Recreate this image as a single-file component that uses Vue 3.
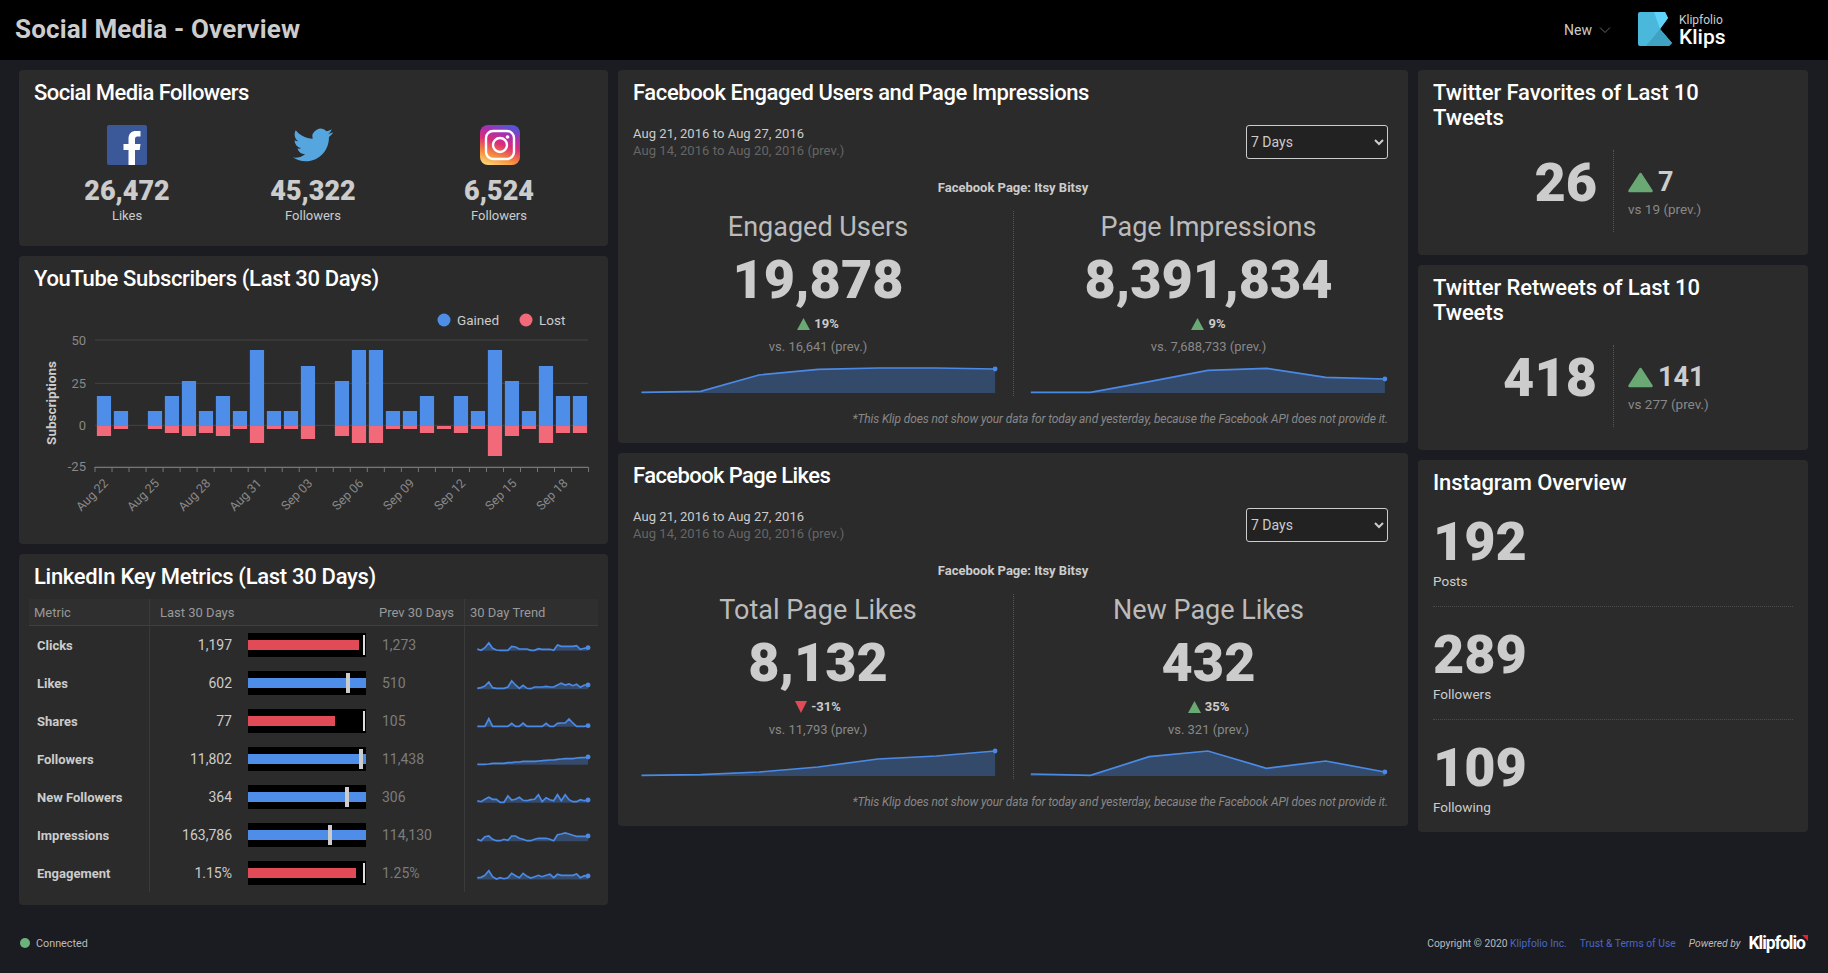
<script setup>
const gained = [441,486,null,486,441,396,486,441,486,303,486,486,351,null,396,303,303,486,486,441,null,441,486,303,396,486,351,441,441]
const lost = [561,540,null,540,552,561,552,561,540,582,540,540,570,null,561,582,582,540,540,552,540,552,540,621,561,540,582,552,552]
const CH = 302
const zy = z => 250 + z / 3 - CH
const zero = zy(531)
const bars = gained.map((g, i) => {
  const x = 245 / 2.529 - 19 + i * 17
  return {
    x,
    gy: g === null ? zero : zy(g),
    gh: g === null ? 0 : zero - zy(g),
    ly: zero,
    lh: lost[i] === null ? 0 : zy(lost[i]) - zero
  }
})
const grid = [{ l: '50', y: zy(273) }, { l: '25', y: zy(403) }, { l: '0', y: zy(529) }, { l: '-25', y: zy(652) }]
const ticks = Array.from({ length: 30 }, (_, i) => 76 + i * 17.02)
const dates = ['Aug 22', 'Aug 25', 'Aug 28', 'Aug 31', 'Sep 03', 'Sep 06', 'Sep 09', 'Sep 12', 'Sep 15', 'Sep 18']

function sparkPath(vals, origin, rowTop) {
  const pts = vals.map((v, i) => [12.3 + 3.82 * i, origin + v / 3 - rowTop])
  const base = Math.max(...pts.map(p => p[1])) + 0.5
  const line = pts.map(p => p[0].toFixed(1) + ',' + p[1].toFixed(1)).join(' ')
  const last = pts[pts.length - 1]
  const area = `M${pts[0][0]},${base} L${line} L${last[0]},${base} Z`
  return { line, area, cx: last[0], cy: last[1] }
}
const raw = [
  { name: 'Clicks', v: '1,197', p: '1,273', w: 94, t: 98.6, thin: true, red: true, o: 625,
    s: [72,76,68,54,70,75,76,76,76,64,66,72,72,72,76,76,71,73,73,73,76,60,64,64,64,64,62,73,70,68] },
  { name: 'Likes', v: '602', p: '510', w: 100, t: 84.6, o: 625,
    s: [190,188,183,171,188,190,190,190,186,168,180,190,181,190,191,186,186,186,184,186,186,180,175,180,177,182,178,187,180,180] },
  { name: 'Shares', v: '77', p: '105', w: 73.6, t: 98.6, thin: true, red: true, o: 625,
    s: [304,304,304,281,304,304,304,304,304,295,304,304,294,304,304,304,304,304,295,304,304,295,294,294,282,294,304,304,304,302] },
  { name: 'Followers', v: '11,802', p: '11,438', w: 100, t: 96, o: 550,
    s: [643,643,643,642,640,640,640,640,638,638,636,636,634,634,634,634,633,632,631,630,630,628,627,626,626,626,624,623,623,621] },
  { name: 'New Followers', v: '364', p: '306', w: 100, t: 84, o: 760,
    s: [122,125,118,112,118,118,127,127,108,120,118,112,121,122,119,118,104,125,113,119,122,104,122,104,119,125,125,119,122,120] },
  { name: 'Impressions', v: '163,786', p: '114,130', w: 100, t: 69.6, o: 760,
    s: [238,242,230,228,238,242,242,238,241,228,228,235,238,242,242,238,235,235,235,238,242,224,222,219,222,226,229,229,229,228] },
  { name: 'Engagement', v: '1.15%', p: '1.25%', w: 91.3, t: 98.6, thin: true, red: true, o: 760,
    s: [353,352,346,332,350,357,353,356,353,340,347,353,340,349,354,350,346,350,346,343,353,343,346,346,346,346,342,353,347,348] }
]
const rows = raw.map((r, i) => ({ ...r, spark: sparkPath(r.s, r.o, 626 + 38 * i) }))

function miniSpark(zx, zs, originY, top, colLeft) {
  const pts = zx.map((x, i) => [615 + x / 1.96 - colLeft, originY + zs[i] / 3 - top])
  const base = Math.max(...pts.map(p => p[1])) + 0.6
  const line = pts.map(p => p[0].toFixed(1) + ',' + p[1].toFixed(1)).join(' ')
  const last = pts[pts.length - 1]
  return { line, area: `M${pts[0][0]},${base} L${line} L${last[0]},${base} Z`, cx: last[0], cy: last[1] }
}
const zl = [52,168,282,398,515,630,745]
const zr = [815,932,1047,1162,1277,1393,1509]
const fbCards = [
  {
    title: 'Facebook Engaged Users and Page Impressions',
    kind: 'fb-a',
    metrics: [
      { label: 'Engaged Users', num: '19,878', delta: '19%', up: true, vs: 'vs. 16,641 (prev.)', sp: miniSpark(zl, [997,994,945,928,924,924,927], 60, 360, 623) },
      { label: 'Page Impressions', num: '8,391,834', delta: '9%', up: true, vs: 'vs. 7,688,733 (prev.)', sp: miniSpark(zr, [997,997,965,931,925,952,957], 60, 360, 1013) }
    ]
  },
  {
    title: 'Facebook Page Likes',
    kind: 'fb-b',
    metrics: [
      { label: 'Total Page Likes', num: '8,132', delta: '-31%', up: false, vs: 'vs. 11,793 (prev.)', sp: miniSpark(zl, [976,974,966,951,927,918,903], 450, 743, 623) },
      { label: 'New Page Likes', num: '432', delta: '35%', up: true, vs: 'vs. 321 (prev.)', sp: miniSpark(zr, [972,976,920,903,955,933,966], 450, 743, 1013) }
    ]
  }
]
const tw = [
  { title: 'Twitter Favorites of Last 10 Tweets', num: '26', d: '7', vs: 'vs 19 (prev.)' },
  { title: 'Twitter Retweets of Last 10 Tweets', num: '418', d: '141', vs: 'vs 277 (prev.)' }
]
const ig = [{ n: '192', l: 'Posts' }, { n: '289', l: 'Followers' }, { n: '109', l: 'Following' }]
</script>

<template>
  <div class="app">
    <header class="top">
      <h1 class="page-title">Social Media - Overview</h1>
      <div class="top-right">
        <span class="new">New</span>
        <svg class="chev" width="12" height="8" viewBox="0 0 12 8"><path d="M1 1.5 6 6.5 11 1.5" fill="none" stroke="#666" stroke-width="1"/></svg>
        <svg class="klogo" width="34" height="34" viewBox="0 0 34 34">
          <path d="M2 0H27L30 6 22 17 34 31 31 34H2Q0 34 0 32V2Q0 0 2 0Z" fill="#4ab8da"/>
          <path d="M16 0H27L30 6 22 17Z" fill="#60d3fb"/>
          <path d="M8 34 22 17 34 31 31 34Z" fill="#3fa2c3"/>
        </svg>
        <div class="kname"><div class="k1">Klipfolio</div><div class="k2">Klips</div></div>
      </div>
    </header>

    <main class="board">
      <section class="col col1">
        <article class="card followers">
          <h2 class="ct">Social Media Followers</h2>
          <div class="soc">
            <div class="soc-item">
              <svg class="soc-ic" width="40" height="40" viewBox="0 0 40 40">
                <rect width="40" height="40" rx="2" fill="#3b5998"/>
                <path d="M21.5 40V25H16.5V19H21.5V14C21.5 8.5 24.5 6 29 6H33.5V11.5H30.5C28.5 11.5 28 12.5 28 14.5V19H33.5L32.7 25H28V40Z" fill="#fff"/>
              </svg>
              <div class="soc-n">26,472</div><div class="soc-l">Likes</div>
            </div>
            <div class="soc-item">
              <svg class="soc-ic" width="40" height="40" viewBox="0 0 24 24">
                <path fill="#55a6de" d="M23.953 4.57a10 10 0 01-2.825.775 4.958 4.958 0 002.163-2.723c-.951.555-2.005.959-3.127 1.184a4.92 4.92 0 00-8.384 4.482C7.69 8.095 4.067 6.13 1.64 3.162a4.822 4.822 0 00-.666 2.475c0 1.71.87 3.213 2.188 4.096a4.904 4.904 0 01-2.228-.616v.06a4.923 4.923 0 003.946 4.827 4.996 4.996 0 01-2.212.085 4.936 4.936 0 004.604 3.417 9.867 9.867 0 01-6.102 2.105c-.39 0-.779-.023-1.17-.067a13.995 13.995 0 007.557 2.209c9.053 0 13.998-7.496 13.998-13.985 0-.21 0-.42-.015-.63A9.935 9.935 0 0024 4.59z"/>
              </svg>
              <div class="soc-n">45,322</div><div class="soc-l">Followers</div>
            </div>
            <div class="soc-item">
              <svg class="soc-ic ig-ic" width="40" height="40" viewBox="0 0 40 40">
                <defs>
                  <linearGradient id="ig" x1="0.25" y1="1" x2="0.6" y2="0">
                    <stop offset="0" stop-color="#fcd26e"/>
                    <stop offset="0.25" stop-color="#f58a3c"/>
                    <stop offset="0.55" stop-color="#dc2d78"/>
                    <stop offset="0.8" stop-color="#a92fb0"/>
                    <stop offset="1" stop-color="#5a52d6"/>
                  </linearGradient>
                </defs>
                <rect width="40" height="40" rx="8" fill="url(#ig)"/>
                <rect x="6" y="6" width="28" height="28" rx="7" fill="none" stroke="#fff" stroke-width="2.4"/>
                <circle cx="20" cy="20" r="7" fill="none" stroke="#fff" stroke-width="2.4"/>
                <circle cx="27.5" cy="12" r="1.8" fill="#fff"/>
              </svg>
              <div class="soc-n">6,524</div><div class="soc-l">Followers</div>
            </div>
          </div>
        </article>

        <article class="card youtube">
          <h2 class="ct">YouTube Subscribers (Last 30 Days)</h2>
          <svg class="yt" width="589" height="226" viewBox="0 0 589 226">
            <g>
              <circle cx="425" cy="19" r="6.5" fill="#4f8ee8"/>
              <text x="438" y="24" class="lg">Gained</text>
              <circle cx="507" cy="19" r="6.5" fill="#f26a7a"/>
              <text x="520" y="24" class="lg">Lost</text>
            </g>
            <g v-for="g in grid" :key="g.l">
              <line x1="76" x2="569" :y1="g.y" :y2="g.y" stroke="#444" stroke-width="1"/>
              <text x="67" :y="g.y + 5" text-anchor="end" class="ax">{{ g.l }}</text>
            </g>
            <text class="yt-title" text-anchor="middle" transform="translate(37 102) rotate(-90)">Subscriptions</text>
            <g v-for="(b, i) in bars" :key="i">
              <rect :x="b.x" :y="b.gy" width="14.2" :height="b.gh" fill="#4f8ee8"/>
              <rect :x="b.x" :y="b.ly" width="14.2" :height="b.lh" fill="#f26a7a"/>
            </g>
            <line x1="75.5" x2="570" y1="166.5" y2="166.5" stroke="#777"/>
            <line v-for="(t, i) in ticks" :key="'t' + i" :x1="t" :x2="t" y1="166" y2="171" stroke="#777"/>
            <text v-for="(d, i) in dates" :key="d" class="ax xl" text-anchor="end"
              :transform="`translate(${90 + i * 51.05} 183) rotate(-45)`">{{ d }}</text>
          </svg>
        </article>

        <article class="card linkedin">
          <h2 class="ct">LinkedIn Key Metrics (Last 30 Days)</h2>
          <div class="tbl">
            <div class="thead">
              <div class="th m">Metric</div>
              <div class="th l">Last 30 Days</div>
              <div class="th p">Prev 30 Days</div>
              <div class="th t">30 Day Trend</div>
            </div>
            <div v-for="r in rows" :key="r.name" class="tr">
              <div class="td-m">{{ r.name }}</div>
              <div class="td-v">{{ r.v }}</div>
              <div class="td-b">
                <div class="bullet">
                  <div class="fill" :class="{ red: r.red }" :style="{ width: r.w + '%' }"></div>
                  <div class="target" :class="{ thin: r.thin }" :style="{ left: r.t + '%' }"></div>
                </div>
              </div>
              <div class="td-p">{{ r.p }}</div>
              <div class="td-t">
                <svg width="134" height="38" viewBox="0 0 134 38">
                  <path :d="r.spark.area" fill="#364a69"/>
                  <polyline :points="r.spark.line" fill="none" stroke="#4a8ae6" stroke-width="1.7"/>
                  <circle :cx="r.spark.cx" :cy="r.spark.cy" r="2.4" fill="#4a8ae6"/>
                </svg>
              </div>
            </div>
          </div>
        </article>
      </section>

      <section class="col col2">
        <article v-for="c in fbCards" :key="c.title" class="card fb" :class="c.kind">
          <h2 class="ct">{{ c.title }}</h2>
          <div class="fb-top">
            <div class="dates">
              <div class="d1">Aug 21, 2016 to Aug 27, 2016</div>
              <div class="d2">Aug 14, 2016 to Aug 20, 2016 (prev.)</div>
            </div>
            <select class="sel"><option>7 Days</option><option>30 Days</option></select>
          </div>
          <div class="page-name">Facebook Page: Itsy Bitsy</div>
          <div class="metrics">
            <div v-for="m in c.metrics" :key="m.label" class="metric">
              <div class="m-label">{{ m.label }}</div>
              <div class="m-num">{{ m.num }}</div>
              <div class="m-delta">
                <svg v-if="m.up" width="13" height="12" viewBox="0 0 13 12"><path d="M6.5 0 13 12H0Z" fill="#6aa874"/></svg>
                <svg v-else width="12" height="12" viewBox="0 0 12 12"><path d="M0 0H12L6 12Z" fill="#e14b57"/></svg>
                <span>{{ m.delta }}</span>
              </div>
              <div class="m-vs">{{ m.vs }}</div>
              <svg class="m-spark" width="390" height="36" viewBox="0 0 390 36">
                <path :d="m.sp.area" fill="#344a6b"/>
                <polyline :points="m.sp.line" fill="none" stroke="#4a8ae6" stroke-width="1.7"/>
                <circle :cx="m.sp.cx" :cy="m.sp.cy" r="2.4" fill="#4a8ae6"/>
              </svg>
            </div>
          </div>
          <div class="note">*This Klip does not show your data for today and yesterday, because the Facebook API does not provide it.</div>
        </article>
      </section>

      <section class="col col3">
        <article v-for="t in tw" :key="t.title" class="card tw">
          <h2 class="ct narrow">{{ t.title }}</h2>
          <div class="tw-body">
            <div class="tw-num">{{ t.num }}</div>
            <div class="tw-right">
              <div class="tw-delta">
                <svg width="25" height="21" viewBox="0 0 25 21"><path d="M12.5 2 23.5 19H1.5Z" fill="#6aa874" stroke="#6aa874" stroke-width="2.5" stroke-linejoin="round"/></svg>
                <span>{{ t.d }}</span>
              </div>
              <div class="tw-vs">{{ t.vs }}</div>
            </div>
          </div>
        </article>
        <article class="card insta">
          <h2 class="ct">Instagram Overview</h2>
          <div class="ig-list">
            <div v-for="(s, i) in ig" :key="s.l" class="ig-row" :class="{ last: i === 2 }">
              <div class="ig-n">{{ s.n }}</div>
              <div class="ig-l">{{ s.l }}</div>
            </div>
          </div>
        </article>
      </section>
    </main>

    <footer class="foot">
      <div class="conn"><span class="dot"></span>Connected</div>
      <div class="foot-r">
        <span>Copyright © 2020 <a class="lnk">Klipfolio Inc.</a></span>
        <a class="lnk">Trust &amp; Terms of Use</a>
        <em>Powered by</em>
        <span class="brand">Klipfolio<svg class="brand-mark" width="6" height="6" viewBox="0 0 6 6"><path d="M0 0H6V6Z" fill="#e8202e"/></svg></span>
      </div>
    </footer>
  </div>
</template>

<style scoped>
.app {
  width: 1828px;
  height: 973px;
  background: #1b1c21;
  display: flex;
  flex-direction: column;
  font-family: Roboto, "Liberation Sans", sans-serif;
  color: #ccc;
  overflow: hidden;
}
.top {
  height: 60px;
  flex: none;
  background: #000;
  display: flex;
  align-items: center;
  justify-content: space-between;
  padding-left: 15px;
}
.page-title {
  margin: -2px 0 0;
  font-size: 26px;
  font-weight: 700;
  color: #ccc;
  letter-spacing: 0.15px;
}
.top-right { display: flex; align-items: center; width: 264px; }
.new { font-size: 14px; color: #ccc; margin-right: 7px; }
.chev { margin-right: 27px; }
.klogo { margin-right: 7px; margin-top: -2px; }
.k1 { font-size: 12px; line-height: 14px; color: #ccc; }
.k2 { font-size: 21px; line-height: 20px; font-weight: 500; color: #fff; }

.board {
  flex: 1;
  display: grid;
  grid-template-columns: 589px 790px 390px;
  column-gap: 10px;
  padding: 10px 20px 0 19px;
  align-items: start;
}
.col { display: flex; flex-direction: column; gap: 10px; }
.card { background: #2b2b2b; border-radius: 4px; padding: 10px 15px 0; box-sizing: border-box; }
.ct { margin: 0; font-size: 22px; line-height: 25px; font-weight: 500; color: #fff; letter-spacing: -0.12px; }
.ct.narrow { max-width: 300px; }
.followers .ct { letter-spacing: -0.58px; }
.youtube .ct { letter-spacing: -0.34px; }
.linkedin .ct { letter-spacing: -0.3px; }
.fb-a .ct { letter-spacing: -0.4px; }
.fb-b .ct { letter-spacing: -0.6px; }

.followers { height: 176px; }
.soc { display: grid; grid-template-columns: repeat(3, 186px); margin-top: 20px; }
.soc-item { display: flex; flex-direction: column; align-items: center; }
.soc-ic { display: block; }
.ig-ic { margin-left: 2px; }
.soc-n { font-size: 27px; line-height: 30px; font-weight: 900; color: #ccc; margin-top: 11px; }
.soc-l { font-size: 13px; line-height: 16px; color: #ccc; margin-top: 2px; }

.youtube { height: 288px; padding-left: 15px; }
.yt { display: block; margin: 10px 0 0 -15px; }
.lg { font-family: Roboto, sans-serif; font-size: 13.5px; fill: #ccc; }
.ax { font-family: Roboto, sans-serif; font-size: 13px; fill: #888; }
.xl { font-size: 12.5px; }
.yt-title { font-family: Roboto, sans-serif; font-size: 13.5px; font-weight: 700; fill: #ccc; }

.linkedin { height: 351px; padding: 10px 10px 0; }
.linkedin .ct { padding-left: 5px; }
.tbl { margin-top: 10px; }
.thead {
  display: grid;
  grid-template-columns: 120px 226px 89px 134px;
  height: 27px;
  background: #2f2f2f;
  border-bottom: 1px solid #3f3f3f;
  box-sizing: border-box;
  font-size: 13px;
  color: #999;
}
.th { line-height: 27px; white-space: nowrap; }
.th.m { padding-left: 5px; }
.th.l { border-left: 1px solid #3a3a3a; padding-left: 10px; }
.th.p { padding-left: 4px; }
.th.t { border-left: 1px solid #3a3a3a; padding-left: 5px; }
.tr {
  display: grid;
  grid-template-columns: 120px 83px 150px 82px 134px;
  height: 38px;
  align-items: center;
  font-size: 14px;
}
.td-m { padding-left: 8px; font-size: 13px; font-weight: 700; color: #ccc; white-space: nowrap; }
.td-v { text-align: right; color: #ccc; border-left: 1px solid #3a3a3a; line-height: 38px; }
.td-b { padding-left: 16px; }
.td-p { color: #7c7c7c; }
.td-t { border-left: 1px solid #3a3a3a; height: 38px; }
.td-t svg { display: block; }
.bullet { position: relative; width: 118px; height: 24px; background: #000; }
.fill { position: absolute; left: 0; top: 7px; height: 10px; background: #4f8ee8; }
.fill.red { background: #e14b57; }
.target { position: absolute; top: 2px; height: 20px; width: 4px; margin-left: -2px; background: #ccc; }
.target.thin { width: 2px; margin-left: -1px; background: #ddd; }

.fb { height: 373px; padding: 10px 20px 0 15px; }
.fb-top { display: flex; justify-content: space-between; margin-top: 20px; height: 34px; }
.dates { font-size: 13px; line-height: 17px; letter-spacing: 0.06px; }
.d1 { color: #ccc; }
.d2 { color: #666; }
.sel {
  width: 142px;
  height: 34px;
  background: #222;
  color: #ccc;
  color-scheme: dark;
  border: 1px solid #ccc;
  border-radius: 3px;
  font-family: Roboto, sans-serif;
  font-size: 14px;
  padding: 0;
}
.page-name { text-align: center; font-size: 13px; line-height: 17px; font-weight: 700; color: #ccc; margin: 20px 0 0 5px; }
.metrics { display: grid; grid-template-columns: 390px 390px; margin: 15px 0 0 -10px; height: 185px; }
.metric { text-align: center; }
.metric + .metric { border-left: 1px dotted #555; }
.m-label { font-size: 27px; line-height: 32px; color: #bbb; }
.m-num { font-size: 54px; line-height: 60px; font-weight: 900; color: #ccc; margin-top: 7px; }
.m-delta { display: flex; justify-content: center; align-items: center; gap: 4px; font-size: 13px; line-height: 16px; font-weight: 700; color: #ccc; margin-top: 6px; height: 16px; }
.m-vs { font-size: 13px; line-height: 16px; color: #888; margin-top: 7px; }
.m-spark { display: block; margin-top: 5px; }
.metric + .metric .m-spark { margin-left: -1px; }
.note { text-align: right; font-size: 12px; line-height: 16px; font-style: italic; color: #888; margin-top: 15px; white-space: nowrap; letter-spacing: -0.12px; }

.tw { height: 185px; }
.tw-body { display: flex; margin-top: 20px; height: 82px; }
.tw-num { width: 164px; text-align: right; font-size: 54px; line-height: 62px; font-weight: 900; color: #ccc; padding-top: 2px; }
.tw-right { margin-left: 16px; border-left: 1px dotted #555; padding-left: 14px; }
.tw-delta { display: flex; align-items: center; gap: 5px; font-size: 27px; line-height: 30px; font-weight: 700; color: #ccc; margin-top: 17px; }
.tw-vs { font-size: 13.5px; line-height: 16px; color: #888; margin-top: 4px; }

.insta { height: 372px; }
.ig-list { margin-top: -1px; }
.ig-row { height: 113px; box-sizing: border-box; border-bottom: 1px dotted #4c4c4c; padding-top: 17px; }
.ig-row.last { border-bottom: 0; }
.ig-n { font-size: 54px; line-height: 62px; font-weight: 900; color: #ccc; }
.ig-l { font-size: 13.5px; line-height: 18px; color: #ccc; margin-top: -1px; }

.foot {
  height: 60px;
  flex: none;
  display: flex;
  align-items: center;
  justify-content: space-between;
  padding: 0 20px;
  font-size: 10.3px;
  color: #bbb;
}
.conn { display: flex; align-items: center; gap: 6px; font-size: 10.8px; }
.dot { width: 10px; height: 10px; border-radius: 50%; background: #6db27c; }
.foot-r { display: flex; align-items: center; gap: 13px; }
.lnk { color: #4a67c4; }
.foot-r em { color: #bbb; }
.brand { position: relative; font-size: 17.5px; font-weight: 700; color: #fff; margin: 0 3px 0 -5px; letter-spacing: -1px; }
.brand-mark { position: absolute; right: -3px; top: 2px; }
</style>
